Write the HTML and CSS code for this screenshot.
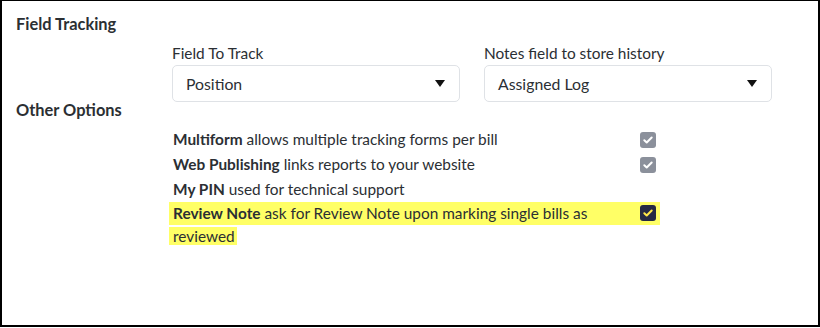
FILE: index.html
```html
<!DOCTYPE html>
<html lang="en">
<head>
    <meta charset="UTF-8">
    <meta name="viewport" content="width=device-width, initial-scale=1.0">
    <title>Field Tracking</title>
    <link rel="stylesheet" href="styles.css">
</head>
<body>
    <div class="frame">
        <!-- field tracking -->
        <h2 class="section-title">Field Tracking</h2>
        <div class="fields">
            <div class="field">
                <label>Field To Track</label>
                <div class="select">
                    <span>Position</span>
                    <svg class="caret" width="10" height="7" viewBox="0 0 10 7"><path d="M0 0h10L5 7z" fill="#111"/></svg>
                </div>
            </div>
            <div class="field">
                <label>Notes field to store history</label>
                <div class="select">
                    <span>Assigned Log</span>
                    <svg class="caret" width="10" height="7" viewBox="0 0 10 7"><path d="M0 0h10L5 7z" fill="#111"/></svg>
                </div>
            </div>
        </div>

        <!-- other options -->
        <h2 class="section-title second">Other Options</h2>
        <div class="options">
            <div class="option">
                <span class="text"><b>Multiform</b> allows multiple tracking forms per bill</span>
                <svg class="check" width="16" height="16" viewBox="0 0 16 16"><rect width="16" height="16" rx="3" fill="#8b909b"/><path d="M4.3 8.2l2.4 2.3 5-5" fill="none" stroke="#fff" stroke-width="2" stroke-linecap="round" stroke-linejoin="round"/></svg>
            </div>
            <div class="option">
                <span class="text"><b>Web Publishing</b> links reports to your website</span>
                <svg class="check" width="16" height="16" viewBox="0 0 16 16"><rect width="16" height="16" rx="3" fill="#8b909b"/><path d="M4.3 8.2l2.4 2.3 5-5" fill="none" stroke="#fff" stroke-width="2" stroke-linecap="round" stroke-linejoin="round"/></svg>
            </div>
            <div class="option">
                <span class="text"><b>My PIN</b> used for technical support</span>
            </div>
            <div class="option highlight">
                <span class="text"><span class="mark"><b>Review Note</b> ask for Review Note upon marking single bills as reviewed</span></span>
                <svg class="check" width="16" height="16" viewBox="0 0 16 16"><rect width="16" height="16" rx="3" fill="#252a44"/><path d="M4.3 8.2l2.4 2.3 5-5" fill="none" stroke="#ffe94a" stroke-width="2" stroke-linecap="round" stroke-linejoin="round"/></svg>
            </div>
        </div>
    </div>
</body>
</html>
```

FILE: styles.css
```css
body {
    margin: 0;
    padding: 0;
    background-color: #ffffff;
    font-family: "Lato", "Noto Sans", sans-serif;
    font-size: 15.4px;
    color: #2b2f34;
}

.frame {
    box-sizing: border-box;
    width: 820px;
    height: 327px;
    border: 2px solid #000000;
    border-top-width: 1px;
    padding: 11px 0 0 14px;
}

.section-title {
    margin: 0;
    font-size: 16.4px;
    font-weight: 700;
    line-height: 24px;
    color: #2b2f33;
}

.section-title.second {
    margin-top: -2px;
    line-height: 20px;
}

.fields {
    display: flex;
    gap: 24px;
    margin: 5px 0 0 156px;
}

.field {
    width: 288px;
}

.field label {
    display: block;
    line-height: 24px;
}

.select {
    box-sizing: border-box;
    height: 37px;
    display: flex;
    align-items: center;
    justify-content: space-between;
    padding: 0 14px 0 13px;
    border: 1px solid #dfe2e6;
    border-radius: 5px;
    background-color: #ffffff;
    font-size: 15.8px;
}

.options {
    width: 491px;
    margin: 7px 0 0 153px;
}

.option {
    display: flex;
    align-items: flex-start;
    justify-content: space-between;
    padding: 0 4px;
    line-height: 25px;
}

.option .text {
    width: 458px;
}

.option .check {
    flex: none;
    margin-top: 5px;
}

.option.highlight {
    line-height: 23px;
    padding-left: 0;
    background: linear-gradient(#ffff66, #ffff66) no-repeat 0 0 / 100% 23px;
}

.option.highlight .check {
    margin-top: 3px;
}

.mark {
    background-color: #ffff66;
    padding: 0 2px 0 4px;
    -webkit-box-decoration-break: clone;
    box-decoration-break: clone;
}
```
